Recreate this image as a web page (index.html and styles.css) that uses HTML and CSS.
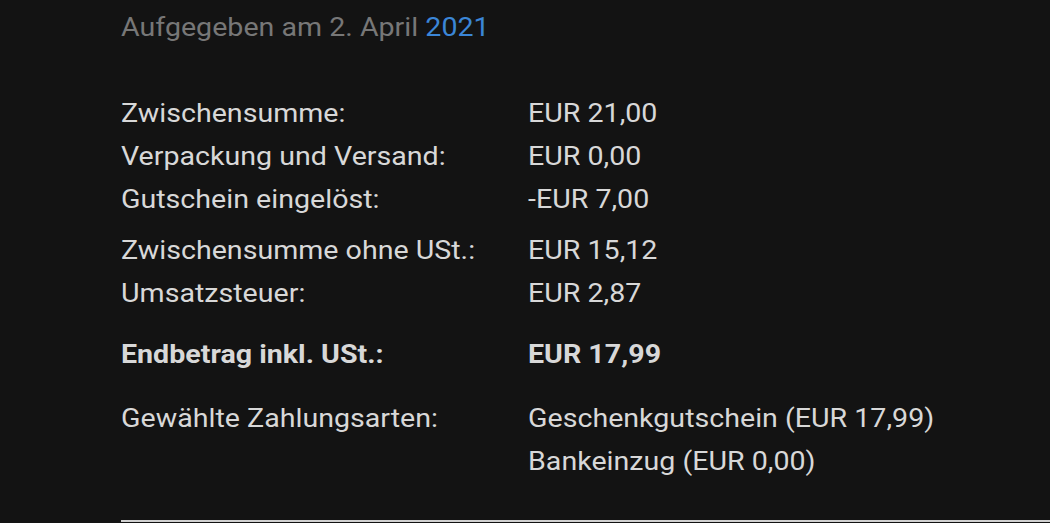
FILE: index.html
```html
<!DOCTYPE html>
<html lang="de">
<head>
<meta charset="utf-8">
<link rel="stylesheet" href="styles.css">
</head>
<body>
<div class="page">
  <div class="sheet">
    <div class="placed">Aufgegeben am 2. April <span class="year">2021</span></div>
    <div class="summary">
      <div class="group">
        <div class="row"><span class="label">Zwischensumme:</span><span class="value">EUR 21,00</span></div>
        <div class="row"><span class="label">Verpackung und Versand:</span><span class="value">EUR 0,00</span></div>
        <div class="row"><span class="label">Gutschein eingelöst:</span><span class="value">-EUR 7,00</span></div>
      </div>
      <div class="group tax">
        <div class="row"><span class="label">Zwischensumme ohne USt.:</span><span class="value">EUR 15,12</span></div>
        <div class="row"><span class="label">Umsatzsteuer:</span><span class="value">EUR 2,87</span></div>
      </div>
      <div class="group total-group">
        <div class="row total"><span class="label">Endbetrag inkl. USt.:</span><span class="value">EUR 17,99</span></div>
      </div>
      <div class="group payment">
        <div class="row"><span class="label">Gewählte Zahlungsarten:</span><span class="value">Geschenkgutschein (EUR 17,99)<br>Bankeinzug (EUR 0,00)</span></div>
      </div>
    </div>
  </div>
  <div class="rule"></div>
</div>
</body>
</html>
```
FILE: styles.css
```css
html, body {
  margin: 0;
  padding: 0;
  background: #131313;
}
body {
  font-family: Roboto, "Liberation Sans", sans-serif;
  color: #d8d8d8;
  width: 1050px;
  height: 523px;
  overflow: hidden;
}
.page {
  padding: 7px 0 0 121px;
}
.sheet {
  width: 820px;
  transform: scaleX(1.1);
  transform-origin: 0 0;
}
.placed {
  font-size: 26px;
  line-height: 40px;
  color: #777777;
  white-space: nowrap;
}
.year {
  color: #3b86d7;
}
.summary {
  margin-top: 45px;
  display: flex;
  flex-direction: column;
}
.group {
  display: flex;
  flex-direction: column;
}
.tax {
  margin-top: 8px;
}
.total-group {
  margin-top: 18px;
}
.payment {
  margin-top: 21px;
}
.row {
  display: grid;
  grid-template-columns: 370px auto;
  font-size: 26px;
  line-height: 43px;
  white-space: nowrap;
}
.total {
  font-weight: 700;
}
.rule {
  margin-top: 37px;
  height: 2px;
  background: #d0d0d0;
}
```
